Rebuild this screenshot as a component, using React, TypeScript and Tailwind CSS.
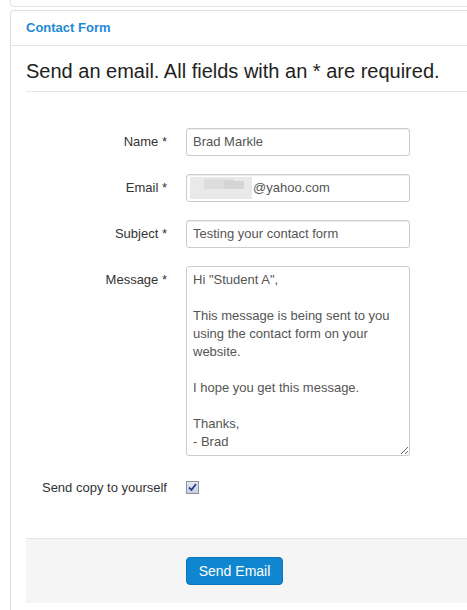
import React from "react";

const font = { fontFamily: '"Liberation Sans", Arial, sans-serif' };

function Row({ label, children, className = "" }: { label: string; children: React.ReactNode; className?: string }) {
  return (
    <div className={"flex " + className}>
      <div className="w-[141px] shrink-0 pt-[6px] pr-[0px] text-right text-[13px] leading-[16px] text-[#333]">{label}</div>
      <div className="ml-[19px]">{children}</div>
    </div>
  );
}

export default function App() {
  const inputCls =
    "w-[224px] h-[28px] border border-[#ccc] rounded-[3px] bg-white px-[6px] text-[13px] text-[#555] flex items-center shadow-[inset_0_1px_1px_rgba(0,0,0,0.075)]";
  return (
    <div className="w-[467px] h-[610px] overflow-hidden bg-white" style={font}>
      <div className="ml-[10px] w-[480px] h-[7px] border border-t-0 border-[#e3e3e3] rounded-b-[4px]" />
      <div className="ml-[10px] mt-[3px] w-[480px] h-[620px] border border-[#dedede] rounded-t-[4px]">
        <div className="h-[35px] border-b border-[#e6e6e6] pl-[15px] flex items-center">
          <span className="text-[13px] font-bold text-[#1d8ad6]">Contact Form</span>
        </div>
        <div className="pl-[15px]">
          <div className="pt-[13px] pb-[8px] border-b border-[#e5e5e5] text-[20px] leading-[24px] text-[#222]">
            Send an email. All fields with an * are required.
          </div>
          <div className="pt-[36px]">
            <Row label="Name *">
              <div className={inputCls}>Brad Markle</div>
            </Row>
            <Row label="Email *" className="mt-[18px]">
              <div className={inputCls + " !px-[3px]"}>
                <span className="inline-block w-[62px] h-[22px] bg-[#e9e9e9] mr-[1px] relative">
                  <span className="absolute left-[14px] top-[2px] w-[30px] h-[10px] bg-[#dcdcdc]" />
                  <span className="absolute left-[34px] top-[4px] w-[20px] h-[8px] bg-[#d4d4d4]" />
                </span>
                @yahoo.com
              </div>
            </Row>
            <Row label="Subject *" className="mt-[18px]">
              <div className={inputCls}>Testing your contact form</div>
            </Row>
            <Row label="Message *" className="mt-[18px]">
              <textarea
                readOnly
                className="block w-[224px] h-[190px] border border-[#ccc] rounded-[3px] bg-white px-[6px] py-[4px] text-[13px] leading-[18px] text-[#555] outline-none resize-y"
                style={font}
                value={'Hi "Student A",\n\nThis message is being sent to you using the contact form on your website.\n\nI hope you get this message.\n\nThanks,\n- Brad'}
              />
            </Row>
            <div className="flex mt-[24px]">
              <div className="w-[141px] shrink-0 text-right text-[13px] leading-[16px] text-[#333]">Send copy to yourself</div>
              <div className="ml-[19px] pt-[1px]">
                <span className="flex w-[13px] h-[13px] border border-[#8f8f9d] bg-gradient-to-b from-[#e4e8f0] to-[#c9d0de] items-center justify-center">
                  <svg width="9" height="9" viewBox="0 0 9 9">
                    <path d="M1 4.5 L3.5 7 L8 1" stroke="#2a3b8f" strokeWidth="1.8" fill="none" />
                  </svg>
                </span>
              </div>
            </div>
            <div className="mt-[42px] h-[65px] bg-[#f5f5f5] border-t border-[#e5e5e5] pl-[160px] pt-[18px]">
              <button className="w-[97px] h-[28px] rounded-[4px] bg-[#0f86cf] border border-[#0b78bd] text-white text-[14px]">
                Send Email
              </button>
            </div>
          </div>
        </div>
      </div>
    </div>
  );
}
